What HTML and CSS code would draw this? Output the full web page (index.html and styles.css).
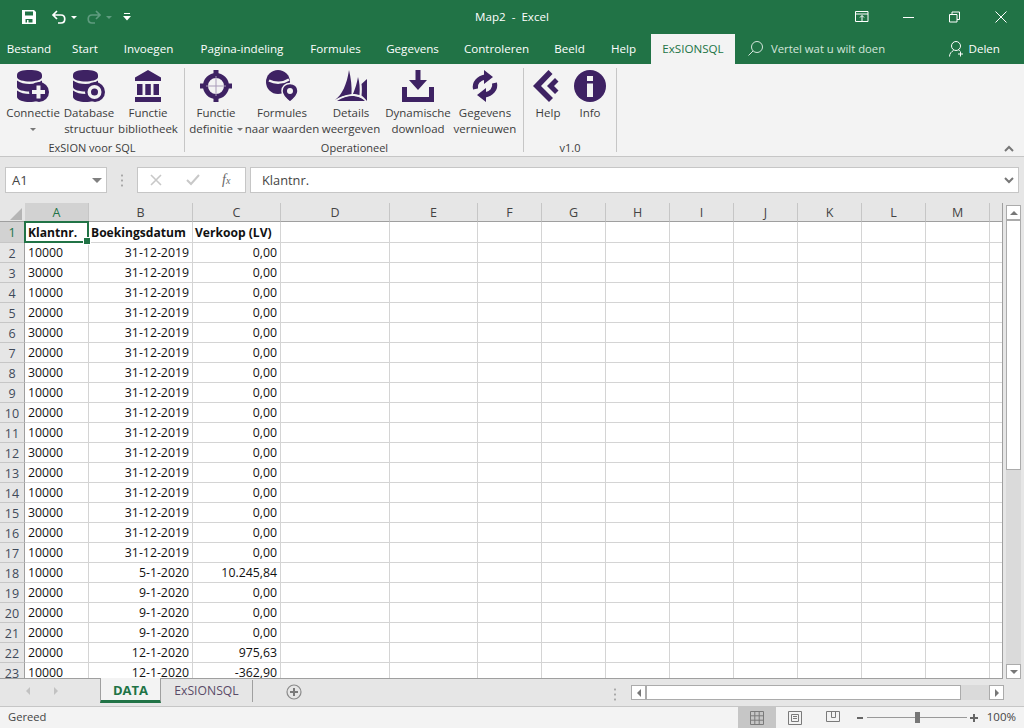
FILE: index.html
```html
<!DOCTYPE html>
<html lang="nl">
<head>
    <meta charset="UTF-8">
    <meta name="viewport" content="width=device-width, initial-scale=1.0">
    <title>Map2 - Excel</title>
    <link rel="stylesheet" href="styles.css">
</head>
<body>
<div class="window">

    <!-- title bar -->
    <header class="titlebar">
        <div class="qat">
            <svg class="qat-save" width="16" height="16" viewBox="0 0 16 16"><path fill="#fff" fill-rule="evenodd" d="M1 1h12l2 2v12H1zM4 2.500v4h8v-4zM4.500 10v3.500h1.500V11h1.500v2.500h4V10z"/></svg>
            <svg class="qat-undo" width="16" height="16" viewBox="0 0 16 16"><path fill="none" stroke="#fff" stroke-width="1.700" d="M6 2 2 6l4 4M2.500 6H10c5 0 5 8 0 8H7"/></svg>
            <span class="caret"></span>
            <svg class="qat-redo" width="16" height="16" viewBox="0 0 16 16"><path fill="none" stroke="#5f9c7f" stroke-width="1.700" d="M10 2l4 4-4 4M13.500 6H6c-5 0-5 8 0 8h3"/></svg>
            <span class="caret caret-dim"></span>
            <svg class="qat-more" width="8" height="8" viewBox="0 0 8 8"><path fill="#fff" d="M1 0h6v1H1zM0 3h8L4 7.500z"/></svg>
        </div>
        <div class="doc-title">Map2&nbsp; - &nbsp;Excel</div>
        <div class="winbtns">
            <svg width="14" height="12" viewBox="0 0 14 12"><path fill="none" stroke="#fff" d="M.5.500h12.500v10H.5zM.5 3h12.500M7 10V4.500M5 6.500l2-2 2 2"/></svg>
            <svg width="12" height="12" viewBox="0 0 12 12"><path stroke="#fff" d="M0 6.500h11"/></svg>
            <svg width="12" height="12" viewBox="0 0 12 12"><path fill="none" stroke="#fff" d="M.5 3.500h7.500v7.500H.5zM3 3.500V1h7.500v7.500H8"/></svg>
            <svg width="12" height="12" viewBox="0 0 12 12"><path stroke="#fff" d="M.5.500l11 11M11.500.500l-11 11"/></svg>
        </div>
    </header>

    <!-- ribbon tabs -->
    <nav class="tabs">
        <div class="tablist">
            <span>Bestand</span><span>Start</span><span>Invoegen</span><span>Pagina-indeling</span><span>Formules</span><span>Gegevens</span><span>Controleren</span><span>Beeld</span><span>Help</span>
            <span class="tab-active">ExSIONSQL</span>
        </div>
        <div class="tellme">
            <svg width="15" height="15" viewBox="0 0 15 15"><path fill="none" stroke="#d5e6dc" d="M9 .5a5.500 5.500 0 1 1 0 11 5.500 5.500 0 0 1 0-11zM5 10 .5 14.500"/></svg>
            <span>Vertel wat u wilt doen</span>
        </div>
        <div class="share">
            <svg width="16" height="16" viewBox="0 0 16 16"><path fill="none" stroke="#fff" d="M7 .5a4 4 0 0 1 0 9 4 4 0 0 1 0-9zM.5 15.500c0-3 2-5 4-6M9.500 9c.8.300 1 .500 1.500 1M11.500 10.500v5M9 13h5"/></svg>
            <span>Delen</span>
        </div>
    </nav>

    <!-- ribbon -->
    <section class="ribbon">
        <div class="group group-sql">
            <div class="btns">
                <div class="btn w58">
                    <svg class="ico" viewBox="0 0 32 32"><path d="M0 5C0 1 6 0 12.500 0S25 1 25 5v2c0 3-7 4.500-12.500 4.500S0 10 0 7zM0 10.500c3 2.500 8 3.500 12.500 3.500s9.500-1 12.500-3.500V17c0 3-7 4.500-12.500 4.500S0 20 0 17zM0 20.500c3 2.500 8 3.500 12.500 3.500s9.500-1 12.500-3.500V27c0 3-7 5-12.500 5S0 30 0 27z"/><circle cx="22" cy="22" r="10"/><path class="cut" d="M19.500 15.500h4V20H28v4h-4.500v4.500h-4V24H15v-4h4.500z"/></svg>
                    <div class="lbl">Connectie<br><span class="caret caret-dark"></span></div>
                </div>
                <div class="btn w54">
                    <svg class="ico" viewBox="0 0 32 32"><path d="M0 5C0 1 6 0 12.500 0S25 1 25 5v2c0 3-7 4.500-12.500 4.500S0 10 0 7zM0 10.500c3 2.500 8 3.500 12.500 3.500s9.500-1 12.500-3.500V17c0 3-7 4.500-12.500 4.500S0 20 0 17zM0 20.500c3 2.500 8 3.500 12.500 3.500s9.500-1 12.500-3.500V27c0 3-7 5-12.500 5S0 30 0 27z"/><circle cx="22" cy="22" r="10"/><circle class="cut" cx="21.500" cy="22" r="7"/><circle cx="21.500" cy="22" r="3.500"/></svg>
                    <div class="lbl">Database<br>structuur</div>
                </div>
                <div class="btn w64">
                    <svg class="ico" viewBox="0 0 32 32"><path d="M16 0 29 7.500V11H3V7.500zM5 14h5.500v11H5zM13.300 14h5.500v11h-5.500zM21.500 14H27v11h-5.500zM3 27h26v5H3z"/></svg>
                    <div class="lbl">Functie<br>bibliotheek</div>
                </div>
            </div>
            <div class="group-name">ExSION voor SQL</div>
        </div>
        <div class="group group-oper">
            <div class="btns">
                <div class="btn w52">
                    <svg class="ico" viewBox="0 0 32 32"><circle class="ring" cx="16" cy="16" r="10.500"/><path class="thick" d="M16 0v8M16 24v8M0 16h8M24 16h8"/><path class="thin" d="M16 6v20M6 16h20"/></svg>
                    <div class="lbl">Functie<br>definitie <span class="caret caret-dark caret-inline"></span></div>
                </div>
                <div class="btn w72">
                    <svg class="ico" viewBox="0 0 32 32"><circle cx="12" cy="12" r="12"/><path class="slash" d="M3 10.500c6 3 14 3 20-1"/><path class="halo" d="M24 13.500c4.500 0 8 3 8 7.500 0 4-4 8-8 11-4-3-8-7-8-11 0-4.500 3.500-7.500 8-7.500z"/><circle class="cut" cx="24" cy="21" r="3"/></svg>
                    <div class="lbl">Formules<br>naar waarden</div>
                </div>
                <div class="btn w66">
                    <svg class="ico" viewBox="0 0 32 32"><path d="M0 30C7 25 12 14 14 0c2 8 3 17 2.500 24C10 25 4 27 0 30zM18 24c2-5 4-11 5-17 1.500 5 2 11 1.500 18-1.500-.5-4.500-1-6.500-1zM26.500 25.500c.5-4.500.5-8.500 0-11.500L32 9v22c-2-2.500-4-4.500-5.500-5.500zM2 31c6-4 12-5.500 17-5 4 .5 8 2 11 5H2z"/><path class="slash-thin" d="M1 30.500c6-4 12-5.500 18-5 4 .4 7 1.500 9 3"/></svg>
                    <div class="lbl">Details<br>weergeven</div>
                </div>
                <div class="btn w68">
                    <svg class="ico" viewBox="0 0 32 32"><path d="M13.500 0h5v10H25l-9 10-9-10h6.500zM0 17h5v10h22V17h5v15H0z"/></svg>
                    <div class="lbl">Dynamische<br>download</div>
                </div>
                <div class="btn w66">
                    <svg class="ico" viewBox="0 0 32 32"><path class="arc" d="M6.500 19C5 13 10 8 16 7M25.500 13c1.500 6-3.500 11-9.500 12"/><path d="M15 0l9 7-9 7zM17 18v14l-9-7z"/></svg>
                    <div class="lbl">Gegevens<br>vernieuwen</div>
                </div>
            </div>
            <div class="group-name">Operationeel</div>
        </div>
        <div class="group group-ver">
            <div class="btns">
                <div class="btn w40">
                    <svg class="ico" viewBox="0 0 32 32"><path d="M16.500 0l4 4L9 16l12 12-4 4L1 16zM23 8l3.500 3.500-4.500 4.500 4.500 4.500L23 24l-8-8z"/></svg>
                    <div class="lbl">Help</div>
                </div>
                <div class="btn w42">
                    <svg class="ico" viewBox="0 0 32 32"><circle cx="16" cy="16" r="16"/><path class="cut" d="M13 6h6v5h-6zM13 13.500h6V27h-6z"/></svg>
                    <div class="lbl">Info</div>
                </div>
            </div>
            <div class="group-name">v1.0</div>
        </div>
        <svg class="collapse" width="10" height="7" viewBox="0 0 10 7"><path fill="none" stroke="#777" stroke-width="2" d="M1 6l4-4 4 4"/></svg>
    </section>

    <!-- formula bar -->
    <section class="formula">
        <div class="namebox"><span>A1</span><i class="caret caret-grey"></i></div>
        <div class="grip"></div>
        <div class="fbtns">
            <svg width="12" height="12" viewBox="0 0 12 12"><path stroke="#c8c8c8" stroke-width="1.600" d="M1 1l10 10M11 1 1 11"/></svg>
            <svg width="14" height="12" viewBox="0 0 14 12"><path fill="none" stroke="#c8c8c8" stroke-width="2" d="M1 6l4 4 8-9"/></svg>
            <span class="fx">f<sub>x</sub></span>
        </div>
        <div class="fvalue">
            <span>Klantnr.</span>
            <svg width="10" height="7" viewBox="0 0 10 7"><path fill="none" stroke="#777" stroke-width="2" d="M1 1l4 4 4-4"/></svg>
        </div>
    </section>

    <!-- sheet -->
    <section class="sheet">
        <div class="grid">
            <table>
                <colgroup>
                    <col class="c-head"><col class="c-a"><col class="c-b"><col class="c-c"><col class="c-d"><col class="c-e">
                    <col class="c-n"><col class="c-n"><col class="c-n"><col class="c-n"><col class="c-n"><col class="c-n"><col class="c-n"><col class="c-n"><col class="c-end">
                </colgroup>
                <thead>
                    <tr>
                        <th class="corner"><svg width="12" height="12" viewBox="0 0 12 12"><path fill="#b5b5b5" d="M12 0v12H0z"/></svg></th>
                        <th class="on">A</th><th>B</th><th>C</th><th>D</th><th>E</th><th>F</th><th>G</th><th>H</th><th>I</th><th>J</th><th>K</th><th>L</th><th>M</th><th class="none"></th>
                    </tr>
                </thead>
                <tbody>
                    <tr class="first"><th class="on">1</th><td class="b sel">Klantnr.</td><td class="b">Boekingsdatum</td><td class="b">Verkoop (LV)</td><td></td><td></td><td></td><td></td><td></td><td></td><td></td><td></td><td></td><td></td><td></td></tr>
                    <tr><th>2</th><td>10000</td><td class="r">31-12-2019</td><td class="r">0,00</td><td></td><td></td><td></td><td></td><td></td><td></td><td></td><td></td><td></td><td></td><td></td></tr>
                    <tr><th>3</th><td>30000</td><td class="r">31-12-2019</td><td class="r">0,00</td><td></td><td></td><td></td><td></td><td></td><td></td><td></td><td></td><td></td><td></td><td></td></tr>
                    <tr><th>4</th><td>10000</td><td class="r">31-12-2019</td><td class="r">0,00</td><td></td><td></td><td></td><td></td><td></td><td></td><td></td><td></td><td></td><td></td><td></td></tr>
                    <tr><th>5</th><td>20000</td><td class="r">31-12-2019</td><td class="r">0,00</td><td></td><td></td><td></td><td></td><td></td><td></td><td></td><td></td><td></td><td></td><td></td></tr>
                    <tr><th>6</th><td>30000</td><td class="r">31-12-2019</td><td class="r">0,00</td><td></td><td></td><td></td><td></td><td></td><td></td><td></td><td></td><td></td><td></td><td></td></tr>
                    <tr><th>7</th><td>20000</td><td class="r">31-12-2019</td><td class="r">0,00</td><td></td><td></td><td></td><td></td><td></td><td></td><td></td><td></td><td></td><td></td><td></td></tr>
                    <tr><th>8</th><td>30000</td><td class="r">31-12-2019</td><td class="r">0,00</td><td></td><td></td><td></td><td></td><td></td><td></td><td></td><td></td><td></td><td></td><td></td></tr>
                    <tr><th>9</th><td>10000</td><td class="r">31-12-2019</td><td class="r">0,00</td><td></td><td></td><td></td><td></td><td></td><td></td><td></td><td></td><td></td><td></td><td></td></tr>
                    <tr><th>10</th><td>20000</td><td class="r">31-12-2019</td><td class="r">0,00</td><td></td><td></td><td></td><td></td><td></td><td></td><td></td><td></td><td></td><td></td><td></td></tr>
                    <tr><th>11</th><td>10000</td><td class="r">31-12-2019</td><td class="r">0,00</td><td></td><td></td><td></td><td></td><td></td><td></td><td></td><td></td><td></td><td></td><td></td></tr>
                    <tr><th>12</th><td>30000</td><td class="r">31-12-2019</td><td class="r">0,00</td><td></td><td></td><td></td><td></td><td></td><td></td><td></td><td></td><td></td><td></td><td></td></tr>
                    <tr><th>13</th><td>20000</td><td class="r">31-12-2019</td><td class="r">0,00</td><td></td><td></td><td></td><td></td><td></td><td></td><td></td><td></td><td></td><td></td><td></td></tr>
                    <tr><th>14</th><td>10000</td><td class="r">31-12-2019</td><td class="r">0,00</td><td></td><td></td><td></td><td></td><td></td><td></td><td></td><td></td><td></td><td></td><td></td></tr>
                    <tr><th>15</th><td>30000</td><td class="r">31-12-2019</td><td class="r">0,00</td><td></td><td></td><td></td><td></td><td></td><td></td><td></td><td></td><td></td><td></td><td></td></tr>
                    <tr><th>16</th><td>20000</td><td class="r">31-12-2019</td><td class="r">0,00</td><td></td><td></td><td></td><td></td><td></td><td></td><td></td><td></td><td></td><td></td><td></td></tr>
                    <tr><th>17</th><td>10000</td><td class="r">31-12-2019</td><td class="r">0,00</td><td></td><td></td><td></td><td></td><td></td><td></td><td></td><td></td><td></td><td></td><td></td></tr>
                    <tr><th>18</th><td>10000</td><td class="r">5-1-2020</td><td class="r">10.245,84</td><td></td><td></td><td></td><td></td><td></td><td></td><td></td><td></td><td></td><td></td><td></td></tr>
                    <tr><th>19</th><td>20000</td><td class="r">9-1-2020</td><td class="r">0,00</td><td></td><td></td><td></td><td></td><td></td><td></td><td></td><td></td><td></td><td></td><td></td></tr>
                    <tr><th>20</th><td>20000</td><td class="r">9-1-2020</td><td class="r">0,00</td><td></td><td></td><td></td><td></td><td></td><td></td><td></td><td></td><td></td><td></td><td></td></tr>
                    <tr><th>21</th><td>20000</td><td class="r">9-1-2020</td><td class="r">0,00</td><td></td><td></td><td></td><td></td><td></td><td></td><td></td><td></td><td></td><td></td><td></td></tr>
                    <tr><th>22</th><td>20000</td><td class="r">12-1-2020</td><td class="r">975,63</td><td></td><td></td><td></td><td></td><td></td><td></td><td></td><td></td><td></td><td></td><td></td></tr>
                    <tr><th>23</th><td>10000</td><td class="r">12-1-2020</td><td class="r">-362,90</td><td></td><td></td><td></td><td></td><td></td><td></td><td></td><td></td><td></td><td></td><td></td></tr>
                </tbody>
            </table>
        </div>
        <div class="vscroll">
            <div class="sbtn"><i class="tri tri-up"></i></div>
            <div class="vthumb"></div>
            <div class="vtrack"></div>
            <div class="sbtn"><i class="tri tri-down"></i></div>
        </div>
    </section>

    <!-- sheet tabs and horizontal scrollbar -->
    <section class="sheetbar">
        <div class="tabnav"><i class="tri tri-left tri-dim"></i><i class="tri tri-right tri-dim"></i></div>
        <div class="stab stab-on">DATA</div>
        <div class="stab">ExSIONSQL</div>
        <div class="addsheet">
            <svg width="16" height="16" viewBox="0 0 16 16"><circle cx="8" cy="8" r="7" fill="none" stroke="#8a8a8a" stroke-width="1.200"/><path stroke="#7a7a7a" stroke-width="2" d="M8 4v8M4 8h8"/></svg>
        </div>
        <div class="grip grip-h"></div>
        <div class="hscroll">
            <div class="sbtn"><i class="tri tri-left"></i></div>
            <div class="hthumb"></div>
            <div class="htrack"></div>
            <div class="sbtn"><i class="tri tri-right"></i></div>
        </div>
    </section>

    <!-- status bar -->
    <footer class="status">
        <span class="ready">Gereed</span>
        <div class="view view-on">
            <svg width="14" height="14" viewBox="0 0 14 14"><path fill="none" stroke="#7a7a7a" d="M.5.500h13v13H.5zM.5 4.800h13M.5 9.200h13M4.800.500v13M9.200.500v13"/></svg>
        </div>
        <div class="view">
            <svg width="14" height="14" viewBox="0 0 14 14"><path fill="none" stroke="#7a7a7a" d="M.5.500h13v13H.5zM3.500 3.500h7v7h-7zM5 5.500h4M5 7.500h4"/></svg>
        </div>
        <div class="view">
            <svg width="14" height="14" viewBox="0 0 14 14"><path fill="none" stroke="#7a7a7a" d="M.5.500h13v10H.5zM5.500.500v6h4v-6"/></svg>
        </div>
        <div class="zoomer">
            <i class="zminus"></i>
            <div class="zline"><i class="zknob"></i></div>
            <svg width="8" height="8" viewBox="0 0 8 8"><path stroke="#666" stroke-width="2" d="M4 0v8M0 4h8"/></svg>
        </div>
        <span class="pct">100%</span>
    </footer>
</div>
</body>
</html>
```
FILE: styles.css
```css
* { box-sizing: border-box; }
body { margin: 0; background-color: #e6e6e6; font-family: "Open Sans", "Noto Sans", sans-serif; font-size: 12px; color: #333; }
.window { width: 1024px; height: 728px; display: flex; flex-direction: column; overflow: hidden; }

/* title bar */
.titlebar { height: 34px; flex: none; background-color: #217346; color: white; display: grid; grid-template-columns: 1fr 90px 1fr; align-items: center; }
.qat { display: flex; align-items: center; padding-left: 21px; }
.qat-save { margin-right: 14px; }
.qat-undo { margin-right: 4px; }
.qat-redo { margin-left: 9px; margin-right: 4px; }
.qat-more { margin-left: 11px; }
.doc-title { text-align: center; font-size: 11.600px; white-space: nowrap; padding-bottom: 2px; }
.winbtns { display: flex; justify-content: flex-end; align-items: center; gap: 34px; padding-right: 17px; }
.caret { display: inline-block; width: 0; height: 0; border-left: 3px solid transparent; border-right: 3px solid transparent; border-top: 3px solid white; }
.caret-dim { border-top-color: #5f9c7f; }
.caret-dark { border-top-color: #777; vertical-align: middle; }
.caret-inline { margin-left: 1px; }
.caret-grey { border-left-width: 5px; border-right-width: 5px; border-top: 5px solid #808080; }

/* ribbon tabs */
.tabs { height: 30px; flex: none; background-color: #217346; color: white; display: flex; align-items: stretch; font-size: 11.600px; }
.tablist { display: grid; grid-template-columns: 58px 54px 73px 114px 73px 81px 87px 59px 49px 84px; column-gap: 0; }
.tablist span { display: flex; align-items: center; justify-content: center; white-space: nowrap; padding-bottom: 1px; }
.tablist .tab-active { margin-left: 3px; margin-right: -3px; background-color: #f3f3f3; color: #217346; }
.tellme { display: flex; align-items: center; gap: 8px; margin-left: 16px; color: #d5e6dc; font-size: 11.300px; padding-bottom: 1px; }
.share { display: flex; align-items: center; gap: 4px; margin-left: auto; padding: 0 24px 1px 0; }

/* ribbon */
.ribbon { height: 93px; flex: none; background-color: #f3f3f3; border-bottom: 1px solid #c6c6c6; display: flex; position: relative; padding-top: 4px; }
.group { height: 84px; border-right: 1px solid #c6c6c6; display: flex; flex-direction: column; justify-content: space-between; }
.group-sql { width: 185px; padding-left: 4px; }
.group-oper { width: 339px; padding-left: 5px; }
.group-ver { width: 93px; padding-left: 4px; }
.btns { display: flex; }
.btn { display: flex; flex-direction: column; align-items: center; padding-top: 2px; }
.w40 { width: 40px; } .w42 { width: 44px; } .w52 { width: 52px; margin-right: 4px; } .w54 { width: 54px; } .w58 { width: 58px; } .w64 { width: 64px; } .w66 { width: 66px; } .w68 { width: 68px; } .w72 { width: 72px; }
.ico { width: 32px; height: 32px; flex: none; fill: #3e2263; }
.ico .halo { stroke: #f3f3f3; stroke-width: 1.500; }
.ico .cut { fill: #f3f3f3; }
.ico .ring { fill: #f3f3f3; stroke: #3e2263; stroke-width: 5; }
.ico .thick { stroke: #3e2263; stroke-width: 5; fill: none; }
.ico .thin { stroke: #a99bb9; stroke-width: 1; fill: none; }
.ico .slash { fill: none; stroke: #f3f3f3; stroke-width: 2.500; }
.ico .slash-thin { fill: none; stroke: #f3f3f3; stroke-width: 1; }
.ico .arc { fill: none; stroke: #3e2263; stroke-width: 5; }
.lbl { margin-top: 3px; text-align: center; font-size: 11.500px; line-height: 16px; white-space: nowrap; color: #3c3c3c; }
.group-name { text-align: center; font-size: 11px; line-height: 16px; color: #3c3c3c; margin-left: -4px; margin-bottom: -4px; }
.collapse { position: absolute; right: 10px; bottom: 4px; }

/* formula bar */
.formula { height: 46px; flex: none; display: flex; align-items: flex-start; padding: 10px 5px 0; }
.namebox, .fbtns, .fvalue { height: 26px; background-color: white; border: 1px solid #c6c6c6; display: flex; align-items: center; }
.namebox { width: 102px; justify-content: space-between; padding: 0 4px 0 6px; font-size: 13px; color: #444; }
.grip { width: 2px; height: 14px; margin: 6px 14px 0 14px; background-image: radial-gradient(circle, #a8a8a8 1px, transparent 1.200px); background-size: 2px 5px; }
.fbtns { width: 109px; padding-left: 12px; gap: 24px; }
.fx { font-family: "Liberation Serif", serif; font-style: italic; font-size: 14px; color: #666; margin-left: -2px; }
.fx sub { font-size: 10px; vertical-align: baseline; }
.fvalue { margin-left: 4px; flex: 1; justify-content: space-between; padding: 0 4px 0 11px; font-size: 12.800px; color: #444; }

/* sheet */
.sheet { height: 476px; flex: none; display: flex; }
.grid { width: 1003px; flex: none; overflow: hidden; border-right: 1px solid #9f9f9f; border-bottom: 1px solid #9f9f9f; }
table { table-layout: fixed; width: 1002px; border-collapse: separate; border-spacing: 0; }
.c-head { width: 25px; } .c-a { width: 64px; } .c-b { width: 104px; } .c-c { width: 88px; } .c-d { width: 109px; } .c-e { width: 88px; } .c-n { width: 64px; } .c-end { width: 12px; }
thead th { height: 19px; padding: 1px 0 0; background-color: #e6e6e6; border-right: 1px solid #c6c6c6; border-bottom: 1px solid #9f9f9f; font-weight: normal; font-size: 12.500px; color: #444; }
thead th.none { border-right: none; }
thead .corner { padding: 0; border-right: 1px solid #e6e6e6; }
.corner svg { display: block; margin: 4px 0 0 10px; }
thead .on, tbody .on { background-color: #d2d2d2; color: #217346; }
tbody tr { height: 20px; }
tbody tr.first { height: 21px; }
tbody th { padding: 1px 0 0; background-color: #e6e6e6; border-right: 1px solid #9f9f9f; border-bottom: 1px solid #c6c6c6; font-weight: normal; font-size: 12.500px; color: #3f4a5a; }
td { padding: 1px 3px 0 3px; background-color: white; border-right: 1px solid #d4d4d4; border-bottom: 1px solid #d4d4d4; font-size: 12.300px; color: #111; white-space: nowrap; overflow: hidden; line-height: 16px; }
td:last-child { border-right: none; }
td.r { text-align: right; }
td.b { font-weight: bold; font-size: 12.100px; overflow: visible; padding-left: 2px; padding-right: 0; }
td.sel { position: relative; padding-left: 3px; }
td.sel::before { content: ""; position: absolute; left: -1px; top: -1px; right: -1px; bottom: -1px; border: 2px solid #217346; }
td.sel::after { content: ""; position: absolute; right: -3px; bottom: -3px; width: 6px; height: 6px; background-color: #217346; border: 1px solid white; }

/* scrollbars */
.vscroll { width: 15px; margin: 2px 0 0 3px; display: flex; flex-direction: column; flex: none; }
.sbtn { width: 15px; height: 15px; flex: none; background-color: white; border: 1px solid #ababab; display: flex; align-items: center; justify-content: center; }
.vthumb { height: 250px; flex: none; background-color: white; border: 1px solid #ababab; }
.vtrack { flex: 1; background-color: #dadada; }
.tri { display: block; width: 0; height: 0; border: 4px solid transparent; }
.tri-up { border-bottom-color: #777; border-top: none; }
.tri-down { border-top-color: #777; border-bottom: none; }
.tri-left { border-right-color: #777; border-left: none; }
.tri-right { border-left-color: #777; border-right: none; }
.tri-dim.tri-left { border-right-color: #c2c2c2; }
.tri-dim.tri-right { border-left-color: #c2c2c2; }

/* sheet tabs */
.sheetbar { height: 27px; flex: none; display: flex; align-items: flex-start; }
.tabnav { width: 100px; height: 24px; display: flex; align-items: center; gap: 24px; padding-left: 26px; }
.stab { width: 92px; text-align: center; color: #5a4a66; font-size: 12.200px; border-right: 1px solid #a0a0a0; margin-top: 1px; height: 22px; line-height: 21px; }
.stab-on { width: 61px; height: 25px; margin-top: -1px; padding-top: 1px; background-color: #f3f3f3; color: #217346; font-weight: bold; font-size: 13px; border-left: 1px solid #9f9f9f; border-right: 1px solid #9f9f9f; border-bottom: 3px solid #217346; line-height: 22px; }
.addsheet { margin: 5px 0 0 33px; }
.grip-h { margin: 8px 15px 0 312px; }
.hscroll { display: flex; margin-top: 6px; }
.hthumb { width: 315px; height: 15px; background-color: white; border: 1px solid #ababab; }
.htrack { width: 28px; height: 15px; background-color: #dadada; }

/* status bar */
.status { flex: 1; background-color: #f3f3f3; border-top: 1px solid #c6c6c6; display: flex; align-items: center; color: #444; }
.ready { padding: 0 0 2px 8px; margin-right: auto; font-size: 11.200px; }
.view { width: 38px; height: 21px; display: flex; align-items: center; justify-content: center; }
.view-on { background-color: #c6c6c6; }
.zoomer { display: flex; align-items: center; margin-left: 5px; }
.zminus { width: 6px; height: 2px; background-color: #666; margin-right: 4px; }
.zline { width: 100px; height: 1px; background-color: #999; position: relative; margin-right: 3px; }
.zknob { position: absolute; left: 48px; top: -5px; width: 5px; height: 11px; background-color: #777; }
.pct { margin-left: 9px; padding: 0 8px 2px 0; font-size: 11.500px; }
```
